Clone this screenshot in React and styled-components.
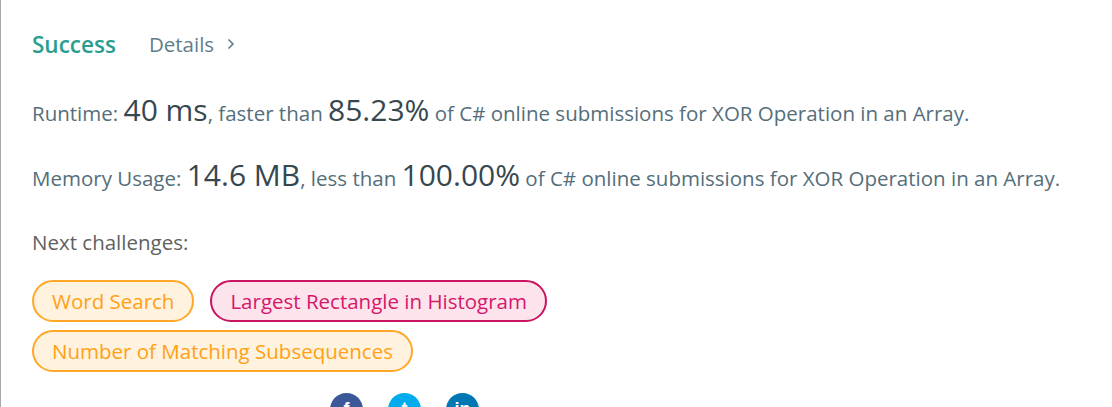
import React from "react";
import styled, { createGlobalStyle } from "styled-components";

const GlobalStyle = createGlobalStyle`
  html, body {
    margin: 0;
    padding: 0;
    background: #fff;
  }
  body {
    font-family: "Open Sans", "Noto Sans", sans-serif;
    color: #546e7a;
  }
`;

const Panel = styled.div`
  height: 407px;
  box-sizing: border-box;
  border-left: 1px solid #a8a8a8;
  padding: 28px 0 0 31px;
  overflow: hidden;
`;

const Header = styled.div`
  display: flex;
  align-items: center;
  gap: 33px;
  height: 32px;
`;

const Status = styled.span`
  font-size: 22.5px;
  font-weight: 600;
  color: #2a9d8f;
`;

const DetailsLink = styled.a`
  font-size: 20.5px;
  color: #607d8b;
  text-decoration: none;
  display: inline-flex;
  align-items: center;
  gap: 13px;
`;

const Stat = styled.div`
  font-size: 20.5px;
  margin-top: ${(p) => p.$top}px;
  line-height: 36px;
  white-space: nowrap;
`;

const Big = styled.span`
  font-size: 30px;
  color: #37474f;
`;

const Label = styled.div`
  font-size: 20.5px;
  color: #616161;
  margin-top: 32px;
  line-height: 28px;
`;

const Challenges = styled.div`
  display: flex;
  flex-wrap: wrap;
  gap: 8px 16px;
  margin-top: 24px;
  max-width: 600px;
`;

const tones = {
  medium: { color: "#ffa116", bg: "#fff2de", border: "#ffa828" },
  hard: { color: "#d6176a", bg: "#fde3ec", border: "#c9145f" },
};

const Pill = styled.a`
  display: inline-flex;
  align-items: center;
  height: 42px;
  box-sizing: border-box;
  padding: 0 18px;
  border-radius: 21px;
  border: 2px solid ${(p) => tones[p.$tone].border};
  background: ${(p) => tones[p.$tone].bg};
  color: ${(p) => tones[p.$tone].color};
  font-size: 20.5px;
  text-decoration: none;
`;

const ShareRow = styled.div`
  display: flex;
  align-items: flex-start;
  margin-top: 21px;
`;

const ShareLabel = styled.span`
  font-size: 20.5px;
  color: #616161;
  width: 298px;
  padding-top: 8px;
`;

const Socials = styled.div`
  display: flex;
  gap: 25px;
`;

const Social = styled.span`
  width: 33px;
  height: 33px;
  border-radius: 50%;
  background: ${(p) => p.$bg};
  display: inline-flex;
  align-items: center;
  justify-content: center;
  color: #fff;
  font-family: "Liberation Sans", sans-serif;
  font-weight: bold;
  font-size: 18px;
`;

const Chevron = () => (
  <svg width="8" height="12" viewBox="0 0 8 12" fill="none">
    <path d="M2 2l4 4-4 4" stroke="#607d8b" strokeWidth="1.7" strokeLinecap="round" strokeLinejoin="round" />
  </svg>
);

export default function App() {
  return (
    <>
      <GlobalStyle />
      <Panel>
        <Header>
          <Status>Success</Status>
          <DetailsLink href="#">
            Details <Chevron />
          </DetailsLink>
        </Header>
        <Stat $top={32}>
          Runtime: <Big>40 ms</Big>, faster than <Big>85.23%</Big> of C# online submissions for XOR Operation in an Array.
        </Stat>
        <Stat $top={26}>
          Memory Usage: <Big>14.6 MB</Big>, less than <Big>100.00%</Big> of C# online submissions for XOR Operation in an Array.
        </Stat>
        <Label>Next challenges:</Label>
        <Challenges>
          <Pill $tone="medium" href="#">Word Search</Pill>
          <Pill $tone="hard" href="#">Largest Rectangle in Histogram</Pill>
          <Pill $tone="medium" href="#">Number of Matching Subsequences</Pill>
        </Challenges>
        <ShareRow>
          <ShareLabel>Share your acceptance!</ShareLabel>
          <Socials>
            <Social $bg="#3b5998">f</Social>
            <Social $bg="#00aced">t</Social>
            <Social $bg="#0077b5">in</Social>
          </Socials>
        </ShareRow>
      </Panel>
    </>
  );
}
